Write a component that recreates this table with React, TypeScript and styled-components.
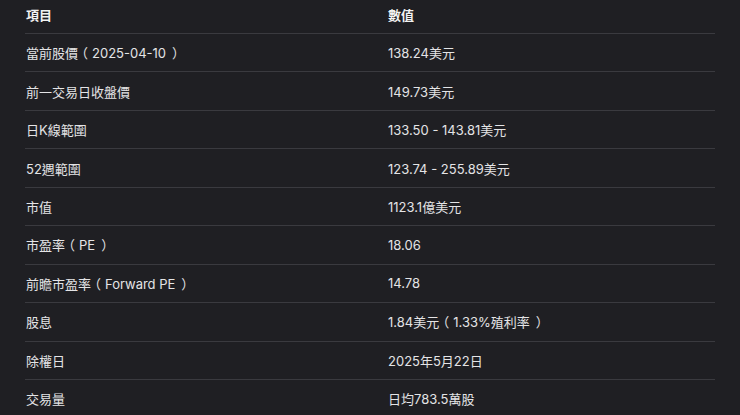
import styled, {createGlobalStyle} from "styled-components";

const GlobalStyle = createGlobalStyle`
  html, body {
    margin: 0;
    padding: 0;
    background: #1f1f23;
  }
  body {
    font-family: "Inter", "Noto Sans CJK TC", sans-serif;
    color: #e4e4e6;
  }
`;

const Page = styled.div`
  width: 740px;
  height: 415px;
  overflow: hidden;
  background: #1f1f23;
  padding: 0 25px;
  box-sizing: border-box;
`;

const Table = styled.div`
  width: 690px;
  display: flex;
  flex-direction: column;
`;

const Row = styled.div<{$head?: boolean}>`
  display: grid;
  grid-template-columns: 362px 1fr;
  align-items: center;
  box-sizing: border-box;
  height: ${(p) => (p.$head ? "33px" : "38.44px")};
  padding: ${(p) => (p.$head ? "0 0 5px" : "0")};
  border-top: ${(p) => (p.$head ? "none" : "1px solid #3a3a3f")};
  font-size: 13px;
  font-weight: ${(p) => (p.$head ? 600 : 400)};
  color: ${(p) => (p.$head ? "#f2f2f2" : "#e4e4e6")};
`;

const Cell = styled.div`
  padding-left: 1px;
  white-space: nowrap;
`;

// fullwidth brackets: half-width glyph, padded so the ink sits like the reference
const Paren = styled.span<{$close?: boolean}>`
  font-feature-settings: "halt";
  padding: ${(p) => (p.$close ? "0 0 0 6px" : "0 4px 0 3.5px")};
`;

const withParens = (s: string) =>
  s.split(/([（）])/).map((part, i) =>
    part === "（" || part === "）" ? (
      <Paren key={i} $close={part === "）"}>
        {part}
      </Paren>
    ) : (
      part
    )
  );

const rows: [string, string][] = [
  ["當前股價（2025-04-10）", "138.24美元"],
  ["前一交易日收盤價", "149.73美元"],
  ["日K線範圍", "133.50 - 143.81美元"],
  ["52週範圍", "123.74 - 255.89美元"],
  ["市值", "1123.1億美元"],
  ["市盈率（PE）", "18.06"],
  ["前瞻市盈率（Forward PE）", "14.78"],
  ["股息", "1.84美元（1.33%殖利率）"],
  ["除權日", "2025年5月22日"],
  ["交易量", "日均783.5萬股"],
];

export default function App() {
  return (
    <Page>
      <GlobalStyle />
      <Table>
        <Row $head>
          <Cell>項目</Cell>
          <Cell>數值</Cell>
        </Row>
        {rows.map(([k, v]) => (
          <Row key={k}>
            <Cell>{withParens(k)}</Cell>
            <Cell>{withParens(v)}</Cell>
          </Row>
        ))}
      </Table>
    </Page>
  );
}
